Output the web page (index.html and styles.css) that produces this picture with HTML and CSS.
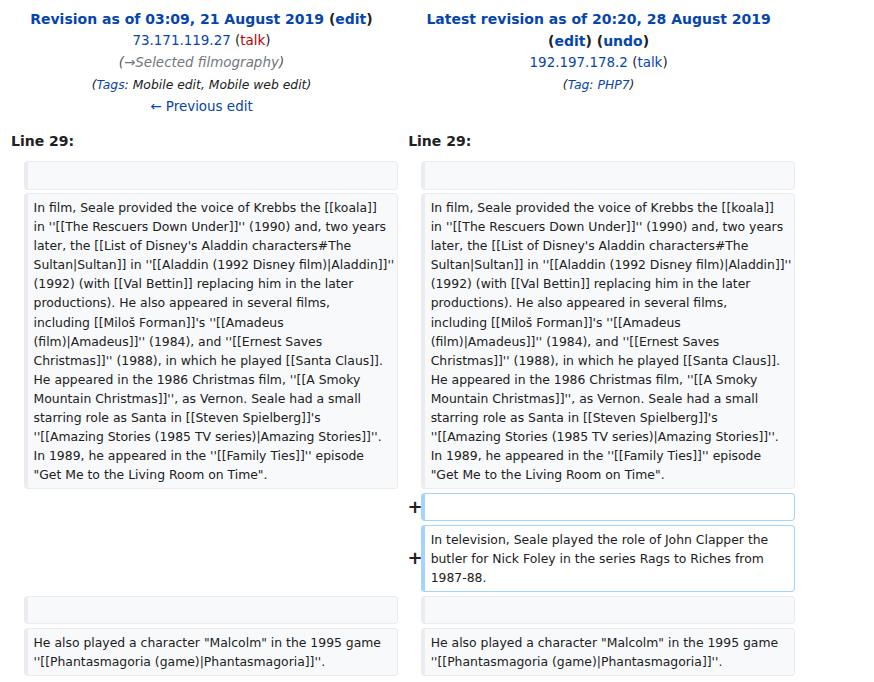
FILE: index.html
```html
<!DOCTYPE html>
<html lang="en">
<head>
<meta charset="utf-8">
<title>Difference between revisions</title>
<link rel="stylesheet" href="styles.css">
</head>
<body>
<div class="diff">
  <div class="head">
    <div class="title"><a href="#">Revision as of 03:09, 21 August 2019</a> (<a href="#">edit</a>)</div>
    <div><a href="#">73.171.119.27</a> (<a href="#" class="new">talk</a>)</div>
    <div class="comment">(<span class="auto">→Selected filmography</span>)</div>
    <div class="tags">(<a href="#">Tags</a>: Mobile edit, Mobile web edit)</div>
    <div><a href="#">← Previous edit</a></div>
  </div>
  <div class="head">
    <div class="title"><a href="#">Latest revision as of 20:20, 28 August 2019</a> (<a href="#">edit</a>) (<a href="#">undo</a>)</div>
    <div><a href="#">192.197.178.2</a> (<a href="#">talk</a>)</div>
    <div class="tags">(<a href="#">Tag</a>: <a href="#">PHP7</a>)</div>
  </div>

  <div class="lineno">Line 29:</div>
  <div class="lineno">Line 29:</div>

  <div class="marker"></div>
  <div class="cell context"></div>
  <div class="marker"></div>
  <div class="cell context"></div>

  <div class="marker"></div>
  <div class="cell context">In film, Seale provided the voice of Krebbs the [[koala]]<br>in ''[[The Rescuers Down Under]]'' (1990) and, two years<br>later, the [[List of Disney's Aladdin characters#The<br>Sultan|Sultan]] in ''[[Aladdin (1992 Disney film)|Aladdin]]''<br>(1992) (with [[Val Bettin]] replacing him in the later<br>productions). He also appeared in several films,<br>including [[Miloš Forman]]'s ''[[Amadeus<br>(film)|Amadeus]]'' (1984), and ''[[Ernest Saves<br>Christmas]]'' (1988), in which he played [[Santa Claus]].<br>He appeared in the 1986 Christmas film, ''[[A Smoky<br>Mountain Christmas]]'', as Vernon. Seale had a small<br>starring role as Santa in [[Steven Spielberg]]'s<br>''[[Amazing Stories (1985 TV series)|Amazing Stories]]''.<br>In 1989, he appeared in the ''[[Family Ties]]'' episode<br>"Get Me to the Living Room on Time".</div>
  <div class="marker"></div>
  <div class="cell context">In film, Seale provided the voice of Krebbs the [[koala]]<br>in ''[[The Rescuers Down Under]]'' (1990) and, two years<br>later, the [[List of Disney's Aladdin characters#The<br>Sultan|Sultan]] in ''[[Aladdin (1992 Disney film)|Aladdin]]''<br>(1992) (with [[Val Bettin]] replacing him in the later<br>productions). He also appeared in several films,<br>including [[Miloš Forman]]'s ''[[Amadeus<br>(film)|Amadeus]]'' (1984), and ''[[Ernest Saves<br>Christmas]]'' (1988), in which he played [[Santa Claus]].<br>He appeared in the 1986 Christmas film, ''[[A Smoky<br>Mountain Christmas]]'', as Vernon. Seale had a small<br>starring role as Santa in [[Steven Spielberg]]'s<br>''[[Amazing Stories (1985 TV series)|Amazing Stories]]''.<br>In 1989, he appeared in the ''[[Family Ties]]'' episode<br>"Get Me to the Living Room on Time".</div>

  <div class="blank"></div>
  <div class="marker">+</div>
  <div class="cell added"></div>

  <div class="blank"></div>
  <div class="marker">+</div>
  <div class="cell added">In television, Seale played the role of John Clapper the<br>butler for Nick Foley in the series Rags to Riches from<br>1987-88.</div>

  <div class="marker"></div>
  <div class="cell context"></div>
  <div class="marker"></div>
  <div class="cell context"></div>

  <div class="marker"></div>
  <div class="cell context">He also played a character "Malcolm" in the 1995 game<br>''[[Phantasmagoria (game)|Phantasmagoria]]''.</div>
  <div class="marker"></div>
  <div class="cell context">He also played a character "Malcolm" in the 1995 game<br>''[[Phantasmagoria (game)|Phantasmagoria]]''.</div>
</div>
</body>
</html>
```

FILE: styles.css
```css
body {
  margin: 0;
  font-family: "DejaVu Sans", sans-serif;
  color: #202122;
  background: #ffffff;
}

a {
  color: #0645ad;
  text-decoration: none;
}

a.new {
  color: #ba0000;
}

.diff {
  display: grid;
  grid-template-columns: 15.58px 373.9px 15.58px 373.9px;
  column-gap: 3.84px;
  row-gap: 3.84px;
  padding: 8.45px 3.84px 3.84px;
  margin-left: 1px;
}

.head {
  grid-column: span 2;
  text-align: center;
  font-size: 13.44px;
  line-height: 22px;
  padding: 0 6.5px;
}

.title {
  font-weight: bold;
  font-size: 14px;
}

.comment {
  font-style: italic;
  color: #54595d;
}

.comment .auto {
  color: #72777d;
}

.tags {
  font-style: italic;
  font-size: 12.36px;
}

.lineno {
  grid-column: span 2;
  font-weight: bold;
  font-size: 14px;
  line-height: 21.5px;
  padding: 8.9px 0 4.5px 6.2px;
}

.cell {
  font-size: 12.4px;
  line-height: 19.04px;
  min-height: 19.04px;
  padding: 3.8px 5.3px;
  border: 1px solid;
  border-left-width: 4px;
  border-radius: 4px;
  white-space: nowrap;
}

.context {
  background: #f8f9fa;
  border-color: #eaecf0;
}

.added {
  background: #ffffff;
  border-color: #a3d3ff;
}

.blank {
  grid-column: span 2;
}

.marker {
  display: flex;
  align-items: center;
  justify-content: flex-end;
  margin-right: -5px;
  font-weight: bold;
  font-size: 18px;
  line-height: 20px;
}
```
